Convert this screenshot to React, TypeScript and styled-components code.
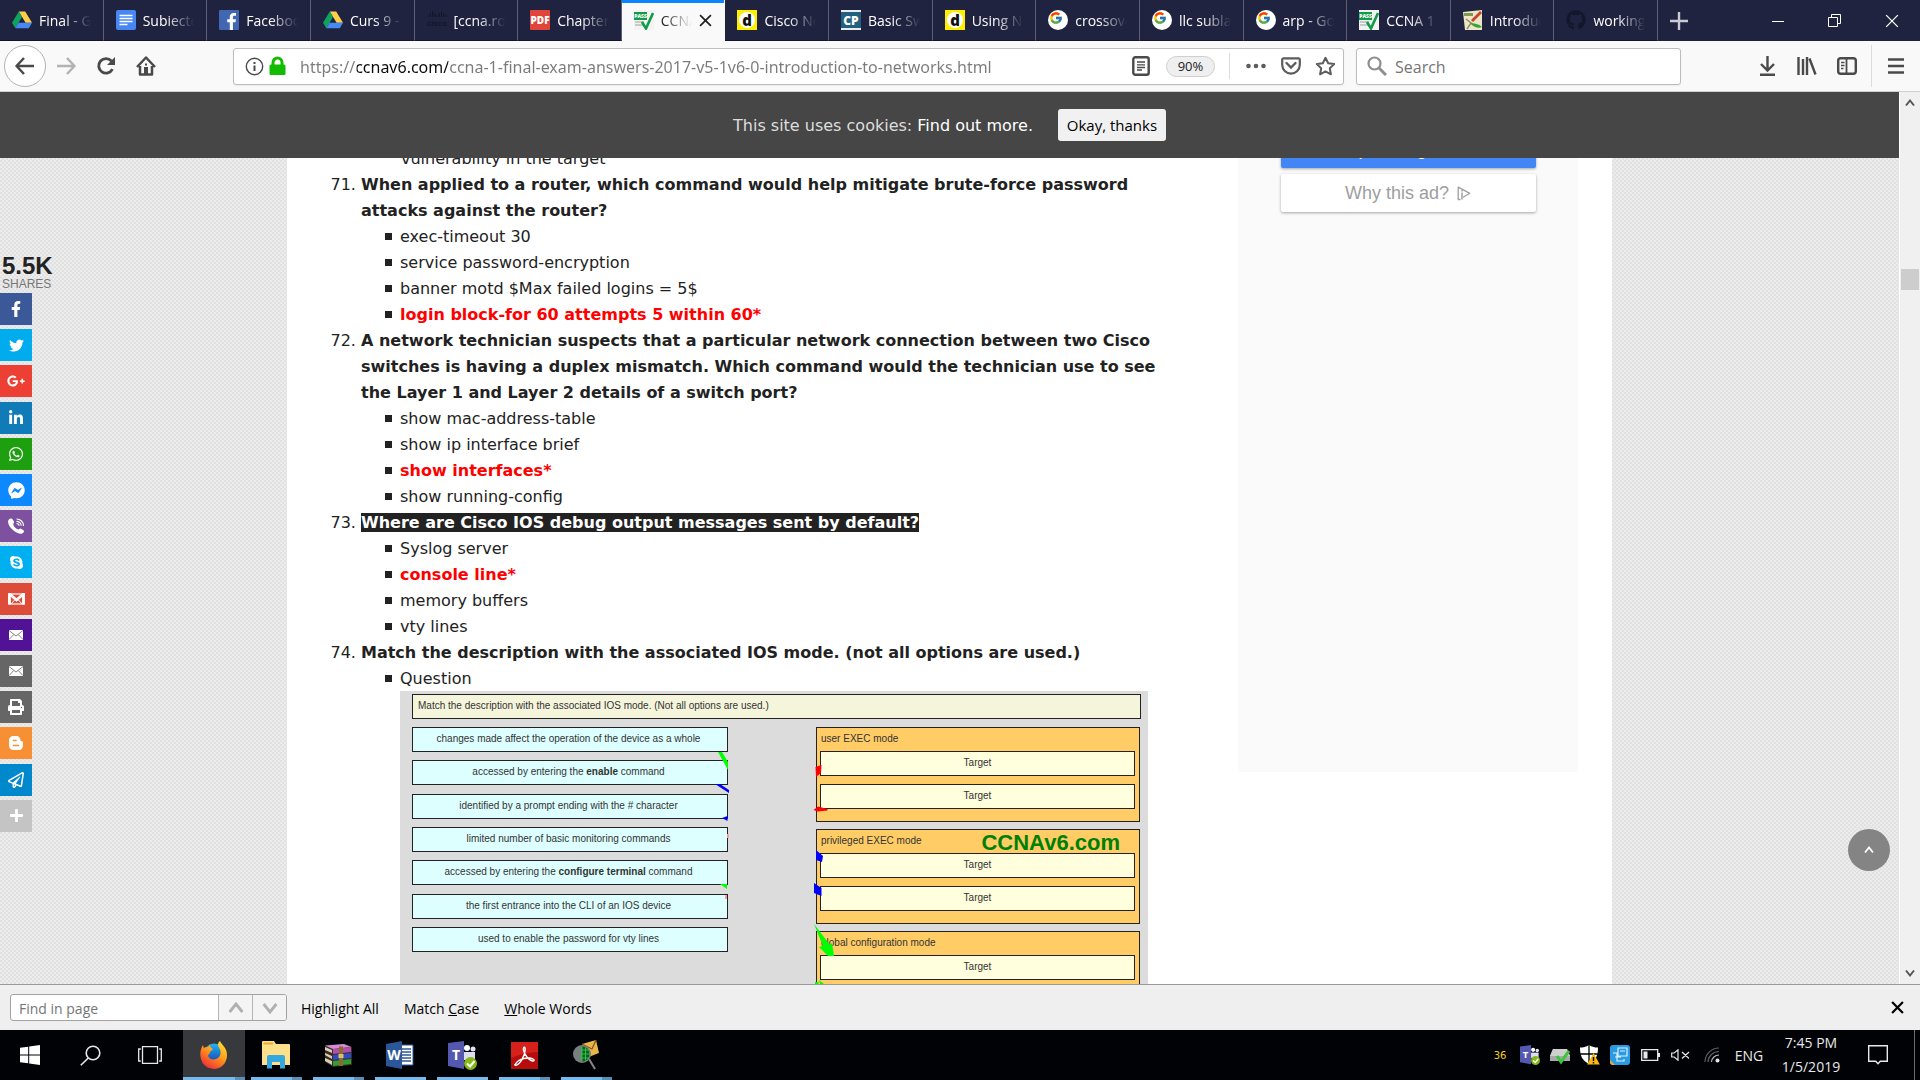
import React from "react";
import styled, { createGlobalStyle, css } from "styled-components";
import { FcGoogle } from "react-icons/fc";
import {
  FaBloggerB, FaFacebookF, FaFacebookMessenger, FaGithub, FaGooglePlusG, FaLinkedinIn,
  FaPlus, FaPrint, FaRegPaperPlane, FaSkype, FaTwitter, FaWhatsapp,
} from "react-icons/fa";

const ui = `"Open Sans", "Noto Sans", sans-serif`;
const body = `"DejaVu Sans", Verdana, sans-serif`;
const arial = `"Liberation Sans", Arial, sans-serif`;

const Global = createGlobalStyle`
  * { box-sizing: border-box; }
  body { margin: 0; font-family: ${ui}; color: #222; }
  button, input { font: inherit; color: inherit; }
  button { border: 0; padding: 0; background: none; cursor: pointer; }
  svg { display: block; flex: none; }
`;

const Screen = styled.div`
  display: flex;
  flex-direction: column;
  height: 100vh;
  overflow: hidden;
`;

/* ---------- tab strip ---------- */
const TabStrip = styled.header`
  display: flex;
  height: 41px;
  flex: none;
  background: #202340;
  color: #fff;
`;
const Tabs = styled.nav`
  display: flex;
  flex: 1;
  min-width: 0;
`;
const Tab = styled.button<{ $active?: boolean }>`
  display: flex;
  align-items: center;
  gap: 7px;
  flex: 1 1 0;
  min-width: 0;
  padding: 0 12px;
  font-size: 14px;
  border-right: 1px solid #5d5f78;
  border-bottom: 1px solid #12142b;
  ${(p) => p.$active && css`
    background: #f9f9fa;
    color: #222;
    border-color: #f9f9fa;
    box-shadow: inset 0 3px #0a84ff;
  `}
`;
const TabTitle = styled.span`
  flex: 1;
  min-width: 0;
  overflow: hidden;
  white-space: nowrap;
  text-align: left;
  mask-image: linear-gradient(to right, #000 calc(100% - 28px), transparent);
`;
const StripEnd = styled.div`
  display: flex;
  width: 262px;
  justify-content: space-between;
`;
const WindowButtons = styled.div`
  display: flex;
`;
const StripButton = styled.button<{ $w: number }>`
  width: ${(p) => p.$w}px;
  display: grid;
  place-items: center;
`;

/* ---------- navigation toolbar ---------- */
const Toolbar = styled.div`
  display: flex;
  align-items: center;
  flex: none;
  height: 51px;
  padding: 0 4px;
  background: #f9f9fa;
  border-bottom: 1px solid #cfcfd0;
  color: #4a4a4b;
`;
const BackButton = styled.button`
  width: 42px;
  height: 42px;
  display: grid;
  place-items: center;
  border: 1px solid #b4b4b5;
  border-radius: 50%;
  background: #fff;
`;
const ToolButton = styled.button<{ $dim?: boolean }>`
  width: 40px;
  height: 40px;
  display: grid;
  place-items: center;
  color: ${(p) => (p.$dim ? "#b3b3b4" : "inherit")};
`;
const Field = styled.div`
  display: flex;
  align-items: center;
  height: 37px;
  border: 1px solid #bdbdbe;
  border-radius: 3px;
  background: #fff;
  box-shadow: 0 1px 2px rgba(0, 0, 0, 0.06);
`;
const UrlField = styled(Field)`
  flex: 1;
  margin-left: 67px;
  padding: 0 0 0 11px;
  gap: 5px;
`;
const UrlInput = styled.input`
  flex: 1;
  min-width: 0;
  height: 30px;
  margin-left: 9px;
  padding: 2px 0 0;
  border: 0;
  outline: 0;
  font-family: "Noto Sans", sans-serif;
  font-size: 16px;
  color: transparent;
  background: linear-gradient(to right, #7b7b7b 57px, #0c0c0d 57px 148px, #7b7b7b 148px);
  background-clip: text;
`;
const Zoom = styled.button`
  width: 49px;
  height: 21px;
  margin: 0 9px 0 11px;
  border: 1px solid #cfcfcf;
  border-radius: 11px;
  background: #efefef;
  font-size: 13px;
  line-height: 18px;
  color: #222;
`;
const Rule = styled.span<{ $h: number; $gap?: number }>`
  width: 1px;
  height: ${(p) => p.$h}px;
  margin: 0 ${(p) => p.$gap ?? 0}px;
  background: #dcdcdd;
`;
const FieldButton = styled.button`
  width: 35px;
  height: 34px;
  display: grid;
  place-items: center;
  color: #5c5c5d;
`;
const FieldActions = styled.div`
  display: flex;
  padding-left: 3px;
`;
const SearchField = styled(Field)`
  width: 325px;
  margin: 0 66px 0 12px;
  padding-left: 10px;
  gap: 8px;
  color: #6f6f70;
`;
const PlainInput = styled.input`
  flex: 1;
  min-width: 0;
  border: 0;
  padding: 2px 0 0;
  outline: 0;
  background: none;
  font-size: 16px;
  &::placeholder { color: #757576; opacity: 1; }
`;

/* ---------- page viewport ---------- */
const Viewport = styled.div`
  display: flex;
  flex: 1;
  min-height: 0;
`;
const Page = styled.main`
  position: relative;
  display: flex;
  flex-direction: column;
  flex: 1;
  min-width: 0;
  overflow: hidden;
  background: repeating-conic-gradient(#ececec 0 25%, #e1e1e1 0 50%) 0 0 / 4px 4px;
  font-family: ${body};
`;
const CookieBar = styled.div`
  display: flex;
  align-items: center;
  justify-content: center;
  gap: 25px;
  flex: none;
  height: 66px;
  background: #464646;
  color: #ddd;
  font-size: 16px;
  a { color: #fff; text-decoration: none; }
`;
const CookieButton = styled.button`
  height: 32px;
  width: 108px;
  border-radius: 3px;
  background: #f1f1f1;
  color: #000;
  font-family: ${ui};
  font-size: 15px;
`;
const Clip = styled.div`
  flex: 1;
  min-height: 0;
  overflow: hidden;
`;
const Panel = styled.div`
  display: flex;
  gap: 90px;
  max-width: 1325px;
  height: 100%;
  margin: 0 auto;
  padding: 0 34px;
  background: #fff;
`;
const Article = styled.article`
  flex: 1;
  min-width: 0;
  margin-top: -12px;
  font-size: 16px;
  line-height: 26px;
`;
const Continued = styled.p`
  margin: 0;
  padding-left: 80px;
`;
const Questions = styled.ol`
  margin: 0;
  padding-left: 40px;
`;
const QuestionText = styled.strong`
  white-space: pre;
`;
const Selected = styled.mark`
  background: #222;
  color: #fff;
`;
const Options = styled.ul`
  margin: 0;
  padding-left: 39px;
  list-style: none;
`;
const Option = styled.li<{ $right?: boolean }>`
  &::before {
    content: "";
    display: inline-block;
    width: 7px;
    height: 7px;
    margin: 0 8px 0 -15px;
    vertical-align: 2px;
    background: #222;
  }
  ${(p) => p.$right && css`
    font-weight: bold;
    color: #f00;
  `}
`;

/* ---------- matching exercise ---------- */
const Figure = styled.figure`
  position: relative;
  margin: -1px 0 0;
  height: 400px;
  padding: 3px 8px 0 12px;
  background: #dcdcdc;
  font: 10px/22px ${arial};
  color: #333;
`;
const Prompt = styled.div`
  height: 25px;
  margin-right: -1px;
  padding-left: 5px;
  border: 1px solid #222;
  background: #f5f5dc;
`;
const Columns = styled.div`
  display: flex;
  justify-content: space-between;
  align-items: flex-start;
  margin-top: 8px;
`;
const Sources = styled.div`
  display: flex;
  flex-direction: column;
  justify-content: space-between;
  width: 316px;
  height: 225px;
`;
const Source = styled.div`
  height: 25px;
  padding-right: 3px;
  border: 1px solid #222;
  background: #dff;
  text-align: center;
`;
const Groups = styled.div`
  display: flex;
  flex-direction: column;
  gap: 7px;
  width: 324px;
`;
const Group = styled.section`
  display: flex;
  flex-direction: column;
  gap: 8px;
  height: 95px;
  padding: 0 4px 0 3px;
  border: 1px solid #222;
  background: #fc6;
`;
const GroupName = styled.div`
  height: 22px;
  margin-bottom: -7px;
  padding-left: 1px;
`;
const Target = styled.div`
  height: 25px;
  border: 1px solid #222;
  background: #ffd;
  text-align: center;
`;
const Watermark = styled.span`
  position: absolute;
  right: 28px;
  top: 140px;
  font: bold 22px/24px ${arial};
  color: #008000;
`;
const Marks = styled.svg`
  position: absolute;
  left: 0;
  top: 0;
`;

/* ---------- advertisement ---------- */
const Ad = styled.aside`
  display: flex;
  flex-direction: column;
  align-items: center;
  gap: 6px;
  width: 340px;
  height: 642px;
  margin-top: -28px;
  background: #fafafa;
`;
const AdButton = styled.button<{ $blue?: boolean }>`
  display: flex;
  align-items: center;
  justify-content: center;
  gap: 8px;
  width: 255px;
  height: 38px;
  border-radius: 2px;
  background: ${(p) => (p.$blue ? "#4285f4" : "#fff")};
  color: ${(p) => (p.$blue ? "#fff" : "#9e9e9e")};
  box-shadow: 0 1px 3px rgba(0, 0, 0, 0.35);
  font: 18px ${arial};
`;

/* ---------- floating page controls ---------- */
const ShareBar = styled.div`
  position: absolute;
  left: 0;
  top: 162px;
  font-family: ${arial};
`;
const ShareCount = styled.div`
  padding-left: 2px;
  font-size: 12px;
  line-height: 12px;
  color: #777;
  strong {
    display: block;
    font-size: 24px;
    line-height: 24px;
    color: #222;
  }
`;
const ShareList = styled.div`
  display: flex;
  flex-direction: column;
  justify-content: space-between;
  width: 32px;
  height: 539px;
  margin-top: 3px;
`;
const ShareButton = styled.button<{ $bg: string }>`
  display: grid;
  place-items: center;
  height: 32px;
  background: ${(p) => p.$bg};
  color: #fff;
`;
const TopButton = styled.button`
  position: absolute;
  right: 9px;
  bottom: 113px;
  width: 42px;
  height: 42px;
  display: grid;
  place-items: center;
  border-radius: 50%;
  background: #848484;
`;
const Scrollbar = styled.div`
  display: flex;
  flex-direction: column;
  width: 21px;
  border-left: 1px solid #fff;
  background: #f0f0f0;
`;
const ScrollArrow = styled.button`
  display: grid;
  place-items: center;
  height: 22px;
`;
const Track = styled.div`
  flex: 1;
  padding: 155px 1px 0;
`;
const Thumb = styled.div`
  height: 21px;
  background: #cdcdcd;
`;

/* ---------- find bar ---------- */
const FindBar = styled.form`
  display: flex;
  align-items: center;
  flex: none;
  height: 46px;
  padding: 0 16px 0 10px;
  border-top: 1px solid #9a9a9a;
  background: #efefef;
  font-size: 14px;
  color: #000;
`;
const FindGroup = styled.div`
  display: flex;
  width: 277px;
  height: 27px;
  margin-right: 14px;
  border: 1px solid #a3a3a3;
  border-radius: 3px;
  overflow: hidden;
  background: #fff;
`;
const FindInput = styled(PlainInput)`
  padding: 1px 0 0 8px;
  font-size: 14px;
`;
const FindStep = styled.button`
  display: grid;
  place-items: center;
  width: 34px;
  border-left: 1px solid #b4b4b4;
  background: #f4f4f4;
`;
const FindOption = styled.button`
  margin-right: 25px;
  padding-top: 2px;
`;
const FindClose = styled.button`
  margin-left: auto;
`;

/* ---------- taskbar ---------- */
const Taskbar = styled.footer`
  display: flex;
  flex: none;
  height: 50px;
  background: #010206;
  color: #e8e8e8;
`;
const SystemButton = styled.button`
  width: 60px;
  display: grid;
  place-items: center;
`;
const Apps = styled.div`
  display: flex;
  margin-left: 3px;
`;
const AppButton = styled.button<{ $active?: boolean; $stack?: boolean }>`
  width: 62px;
  display: grid;
  place-items: center;
  background:
    linear-gradient(to right, #76b9ed 0 calc(100% - 10px), ${(p) => (p.$stack ? "#5c8fb8" : "#76b9ed")} 0)
      center bottom / ${(p) => (p.$active ? "100%" : "51px")} 3px no-repeat
      ${(p) => (p.$active ? "#38393d" : "transparent")};
`;
const Tray = styled.div`
  display: flex;
  align-items: center;
  margin-left: auto;
  font-size: 14px;
`;
const TrayButton = styled.button<{ $w?: number }>`
  width: ${(p) => p.$w ?? 30}px;
  height: 40px;
  display: grid;
  place-items: center;
`;
const Temperature = styled.span`
  width: 30px;
  text-align: center;
  font: 10px ${body};
  color: #f2cf1d;
`;
const Clock = styled.time`
  width: 84px;
  line-height: 24px;
  text-align: center;
`;
const DesktopEdge = styled.button`
  width: 6px;
  height: 50px;
  margin-left: 11px;
  border-left: 1px solid #6b6b6b;
`;

/* ---------- icons ---------- */
const stroke = (w = 2) => ({ fill: "none", stroke: "currentColor", strokeWidth: w });

const Drive = () => (
  <svg width="20" height="20" viewBox="0 0 20 20">
    <path d="M6.8 1.5h6.4L20 12.8h-6.4z" fill="#ffcf48" />
    <path d="M6.8 1.5 10 7 3.3 18.3 0 12.8z" fill="#11a15f" />
    <path d="M6.5 12.8H20l-3.2 5.5H3.3z" fill="#4688f4" />
  </svg>
);
const Docs = () => (
  <svg width="20" height="20" viewBox="0 0 20 20">
    <rect width="20" height="20" rx="2" fill="#4687f5" />
    <path d="M3.5 5.5h13M3.5 8.5h13M3.5 11.5h13M3.5 14.5h8" stroke="#fff" strokeWidth="1.4" />
  </svg>
);
const Facebook = () => (
  <svg width="20" height="20" viewBox="0 0 20 20">
    <rect width="20" height="20" rx="1" fill="#4267b2" />
    <path d="M10.8 20v-7.7H8.2v-3h2.6V7c0-2.600 1.600-4 3.900-4 1.100 0 2 .1 2.300.1v2.700h-1.600c-1.300 0-1.500.6-1.500 1.500v2h3l-.4 3h-2.600V20z" fill="#fff" />
  </svg>
);
const CiscoIcon = () => (
  <svg width="20" height="20" viewBox="0 0 20 20">
    <path d="M1 5v2M3.300 3v4M5.600 1v6M7.900 3v4M10 5v2M12.200 3v4M14.500 1v6M16.800 3v4M19 5v2" stroke="#11142a" strokeWidth="1" />
    <text x="10" y="16" textAnchor="middle" fontFamily="Liberation Sans" fontWeight="bold" fontSize="8" fill="#11142a">cisco</text>
  </svg>
);
const PdfIcon = () => (
  <svg width="20" height="20" viewBox="0 0 20 20">
    <rect width="20" height="20" rx="1" fill="#e1443a" />
    <text x="10" y="13.700" textAnchor="middle" fontFamily="Open Sans" fontWeight="800" fontSize="10" fill="#fff">PDF</text>
  </svg>
);
const DIcon = () => (
  <svg width="20" height="20" viewBox="0 0 20 20">
    <rect width="20" height="20" fill="#ffee00" />
    <circle cx="10" cy="10" r="8" fill="#fff" />
    <text x="10" y="15.500" textAnchor="middle" fontFamily="Open Sans" fontWeight="800" fontSize="15" fill="#111">d</text>
  </svg>
);
const CpIcon = () => (
  <svg width="20" height="20" viewBox="0 0 20 20">
    <rect width="20" height="20" fill="#e8eef0" />
    <rect y="2" width="20" height="16" fill="#236080" />
    <text x="10" y="14.500" textAnchor="middle" fontFamily="Open Sans" fontWeight="800" fontSize="12" fill="#fff">CP</text>
  </svg>
);
const Pass = () => (
  <svg width="20" height="20" viewBox="0 0 20 20">
    <rect width="20" height="20" fill="#f2f4f2" />
    <rect y="2" width="13" height="8" fill="#129a4b" />
    <text x="6.500" y="8.200" textAnchor="middle" fontFamily="Open Sans" fontWeight="800" fontSize="5" fill="#fff">PASS</text>
    <path d="M1 12h9M1 15h8" stroke="#b8bdb9" strokeWidth="1.600" />
    <path d="m8 12 4 6.500L19 3" fill="none" stroke="#129a4b" strokeWidth="2.600" />
  </svg>
);
const Google = () => (
  <svg width="20" height="20" viewBox="0 0 20 20">
    <circle cx="10" cy="10" r="10" fill="#fff" />
    <FcGoogle x="1" y="1" width="18" height="18" />
  </svg>
);
const Notes = () => (
  <svg width="20" height="20" viewBox="0 0 20 20">
    <path d="M0 2 19 0v20H2z" fill="#eee6c6" />
    <path d="M1 3h9v3H1z" fill="#7b9a52" />
    <path d="m8 10 9-9 2 2-9 9z" fill="#c8452c" />
    <path d="m3 9 5 4-4 6" fill="none" stroke="#8a8f6a" strokeWidth="1.500" />
    <path d="M7 13c4 0 9 1 12 4-3 2-9 0-12-4z" fill="#3aa23d" />
  </svg>
);
const Chevron = ({ up, size = 10, color = "#555", w = 2 }: { up?: boolean; size?: number; color?: string; w?: number }) => (
  <svg width={size} height={size} viewBox="0 0 10 10">
    <path d={up ? "m1 7.500 4-5 4 5" : "m1 2.500 4 5 4-5"} fill="none" stroke={color} strokeWidth={w} />
  </svg>
);
const Cross = ({ size, w }: { size: number; w: number }) => (
  <svg width={size} height={size} viewBox="0 0 12 12"><path d="m1 1 10 10M11 1 1 11" {...stroke(w)} /></svg>
);
const Arrow = ({ left }: { left?: boolean }) => (
  <svg width="20" height="20" viewBox="0 0 20 20">
    <path d={left ? "M19 10H1.500M9 2l-7.500 8L9 18" : "M1 10h17.500M11 2l7.500 8-7.500 8"} {...stroke(2.5)} strokeLinejoin="round" />
  </svg>
);
const Reload = () => (
  <svg width="20" height="20" viewBox="0 0 20 20">
    <path d="M16.500 13.200A7.300 7.300 0 1 1 15.500 5" {...stroke(2.8)} />
    <path d="M19 1v8h-8z" fill="currentColor" />
  </svg>
);
const Home = () => (
  <svg width="20" height="20" viewBox="0 0 20 20">
    <path d="M1 11 10 1.500 19 11M4 10v8.500h12V10" {...stroke(2.5)} strokeLinejoin="round" />
    <path d="M8 11h4v8H8z" fill="currentColor" />
    <path d="M10 7.500v2" {...stroke(2)} />
  </svg>
);
const Info = () => (
  <svg width="19" height="19" viewBox="0 0 19 19">
    <circle cx="9.500" cy="9.500" r="8.200" {...stroke(1.4)} />
    <path d="M9.500 8.500v5.500M9.500 5v2" {...stroke(2)} />
  </svg>
);
const Lock = () => (
  <svg width="17" height="20" viewBox="0 0 17 20">
    <path d="M4 10V6.500a4.500 4.500 0 0 1 9 0V10" fill="none" stroke="#12bc00" strokeWidth="3" />
    <rect x=".5" y="8.500" width="16" height="10.500" rx="1.500" fill="#12bc00" />
  </svg>
);
const Reader = () => (
  <svg width="18" height="20" viewBox="0 0 18 20">
    <rect x="1.300" y="1.300" width="15.400" height="17.400" rx="2" {...stroke(2.4)} />
    <path d="M5 6h8M5 8.800h8M5 11.500h8M5 14h5" {...stroke(1.3)} />
  </svg>
);
const Dots = () => (
  <svg width="20" height="6" viewBox="0 0 20 6"><g fill="currentColor"><circle cx="2.500" cy="3" r="2.300" /><circle cx="10" cy="3" r="2.300" /><circle cx="17.500" cy="3" r="2.300" /></g></svg>
);
const Pocket = () => (
  <svg width="20" height="18" viewBox="0 0 20 18">
    <path d="M2.500 1.300h15a1.300 1.300 0 0 1 1.300 1.300v5.200a8.800 8.800 0 0 1-17.600 0V2.600a1.300 1.300 0 0 1 1.300-1.300z" {...stroke(2.2)} />
    <path d="m5.500 6 4.500 4.500L14.500 6" {...stroke(2.4)} strokeLinecap="round" />
  </svg>
);
const Star = () => (
  <svg width="21" height="20" viewBox="0 0 21 20">
    <path d="m10.500 1.800 2.700 5.500 6 .8-4.400 4.200 1.100 6-5.400-2.900-5.400 2.900 1.100-6L1.800 8.100l6-.8z" {...stroke(2)} strokeLinejoin="round" />
  </svg>
);
const Magnifier = () => (
  <svg width="20" height="20" viewBox="0 0 20 20">
    <circle cx="7.500" cy="7.500" r="6" fill="none" stroke="#8e8e8f" strokeWidth="2.200" />
    <path d="m12 12 7 7" stroke="#8e8e8f" strokeWidth="3" />
  </svg>
);
const Download = () => (
  <svg width="17" height="20" viewBox="0 0 17 20"><path d="M8.500 0v14M2 8l6.500 6.500L15 8M1 18.700h15" {...stroke(2.4)} /></svg>
);
const Library = () => (
  <svg width="20" height="18" viewBox="0 0 20 18"><path d="M1.500 0v18M6 2v16M10 0v18M12.500 1.500 18.500 17.500" {...stroke(2.4)} /></svg>
);
const Sidebar = () => (
  <svg width="20" height="18" viewBox="0 0 20 18">
    <rect x="1.200" y="1.200" width="17.600" height="15.600" rx="2.500" {...stroke(2.4)} />
    <path d="M9.500 1v16" {...stroke(1.8)} />
    <path d="M4 5.500h3.500M4 8.500h3.500M4 11.500h2.500" {...stroke(1.3)} />
  </svg>
);
const Menu = () => (
  <svg width="16" height="16" viewBox="0 0 16 16"><path d="M0 1.500h16M0 8h16M0 14.500h16" {...stroke(2.4)} /></svg>
);
const AdChoices = () => (
  <svg width="14" height="15" viewBox="0 0 14 15">
    <path d="M3.500 13.500H1.200V1.200L12.800 7.300 6 11.200" {...stroke(1.3)} strokeLinejoin="round" />
    <path d="M5 6.500v7M5 4v1.500" {...stroke(1.5)} />
  </svg>
);
const ViberPhone = () => (
  <svg width="17" height="16" viewBox="0 0 17 16">
    <path d="M1 1.500C2.500 0 4 .2 5 2l1 1.800c.4 1-.8 1.700-.8 2.500C5.700 8.500 8 11 10.300 11.500c.9 0 1.500-1.200 2.500-.8l2.700 1.600c1.300 1-.2 3-1.800 3.400C8 16.200 0 9 0 3.500c0-.8.400-1.400 1-2z" fill="#fff" />
    <path d="M8.500 1c4 0 7 3 7 7M8.500 3.300c2.700 0 4.700 2 4.700 4.500M8.500 5.500c1.500 0 2.500 1 2.500 2.300" {...stroke(1.2)} />
  </svg>
);
const Gmail = () => (
  <svg width="17" height="12" viewBox="0 0 17 12">
    <rect x="1" y="1" width="15" height="10" fill="none" stroke="#fff" strokeWidth="1.200" />
    <path d="M1.500 11.500V1l7 6 7-6v10.500" fill="none" stroke="#fff" strokeWidth="2.800" />
    <path d="m3 11 3.500-4M14 11l-3.500-4" stroke="#fff" strokeWidth="1" />
  </svg>
);
const Mail = () => (
  <svg width="14" height="10" viewBox="0 0 14 10">
    <rect width="14" height="10" fill="#fff" />
    <path d="m0 .5 7 5.500 7-5.500M0 9.500 4.800 4.500M14 9.500 9.200 4.500" fill="none" stroke="#777" strokeWidth=".9" />
  </svg>
);
const WindowsLogo = () => (
  <svg width="20" height="20" viewBox="0 0 20 20" fill="#fff">
    <path d="M0 2.800 8.200 1.700v7.800H0zM9.200 1.500 20 0v9.500H9.200zM0 10.500h8.200v7.800L0 17.200zM9.200 10.500H20V20L9.200 18.500z" />
  </svg>
);
const TaskSearch = () => (
  <svg width="21" height="21" viewBox="0 0 21 21"><circle cx="13" cy="8" r="6.800" {...stroke(1.6)} /><path d="M8.300 13 .8 20.300" {...stroke(1.6)} /></svg>
);
const TaskView = () => (
  <svg width="24" height="18" viewBox="0 0 24 18"><path d="M4.500.7h15v16.600h-15zM2.800 3H.7v12h2.100M21.200 3h2.100v12h-2.100" {...stroke(1.3)} /></svg>
);
const Firefox = () => (
  <svg width="28" height="28" viewBox="0 0 28 28">
    <defs>
      <linearGradient id="ff-body" x1=".8" y1="0" x2=".2" y2="1">
        <stop offset="0" stopColor="#ffe22e" /><stop offset=".45" stopColor="#ff9a1a" /><stop offset="1" stopColor="#f0243c" />
      </linearGradient>
      <linearGradient id="ff-globe" x1="0" y1="0" x2="0" y2="1">
        <stop offset="0" stopColor="#1fb4f5" /><stop offset="1" stopColor="#1c3fa8" />
      </linearGradient>
    </defs>
    <circle cx="14" cy="12.500" r="10" fill="url(#ff-globe)" />
    <path d="M20 0c1 2.500 3 4 5 7 3 5 2.500 11-.5 15.500A13.300 13.300 0 0 1 1 18C-.5 13 .5 8 3 4l.8 3C5 6 6.500 5.800 8 6l2-2.500c0 2 .5 3 2.500 4.300.5 1.500-1.500 2-2.500 3 .5 2-2 2-2 4 1 3.500 5 4.500 8.500 3 3-1.300 4.500-4 4-7.500C20 7 17.500 5.500 18 3c.3-1.300 1-2.300 2-3z" fill="url(#ff-body)" />
  </svg>
);
const Explorer = () => (
  <svg width="28" height="28" viewBox="0 0 28 28">
    <path d="M0 1a1 1 0 0 1 1-1h11l2 3h13a1 1 0 0 1 1 1v20H0z" fill="#ffe08a" />
    <path d="M1.500 1.500H11v2H1.500z" fill="#e7ab2d" />
    <path d="M5 27.500V16q0-2 2-2h14q2 0 2 2v11.500h-5V21h-8v6.500z" fill="#35a8e0" />
  </svg>
);
const WinRar = () => (
  <svg width="27" height="23" viewBox="0 0 27 23">
    <path d="M0 2 19 0l8 3v18l-19 2-8-5z" fill="#3b2b20" />
    <path d="m0 1.500 19-1.500 7 3-18 2z" fill="#d58ad2" /><path d="m8 5 18-2v5L8 10z" fill="#b04ea9" />
    <path d="m8 11 18-2v5L8 16z" fill="#2f49c9" /><path d="m8 17 18-2v5L8 22z" fill="#2f9f35" />
    <path d="M0 3l7 3v3L0 6zM0 9l7 3v3l-7-4zM0 14l7 3v4l-7-4z" fill="#d9cdbb" />
    <path d="M14 2.500h4V22h-4z" fill="#8b6a32" /><path d="M13.500 10h5v4h-5z" fill="#d9c06b" />
  </svg>
);
const Word = () => (
  <svg width="28" height="28" viewBox="0 0 28 28">
    <path d="M14 4h13v20H14z" fill="#fff" stroke="#2b579a" /><path d="M16 8h9M16 11h9M16 14h9M16 17h9M16 20h9" stroke="#2b579a" strokeWidth="1.500" />
    <path d="m0 3 16-3v28L0 25z" fill="#2b579a" />
    <text x="8" y="19" textAnchor="middle" fontFamily="Open Sans" fontWeight="700" fontSize="14" fill="#fff">W</text>
  </svg>
);
const Teams = ({ size = 29 }: { size?: number }) => (
  <svg width={size} height={size} viewBox="0 0 29 29">
    <circle cx="19" cy="7" r="3" fill="#fff" /><circle cx="25" cy="8" r="2.500" fill="#e3e3f5" />
    <path d="M16 11h11v8h-11z" fill="#dcdcf2" />
    <path d="m0 2 16-2v28L0 25z" fill="#5558af" />
    <text x="8" y="19" textAnchor="middle" fontFamily="Open Sans" fontWeight="700" fontSize="14" fill="#fff">T</text>
    <circle cx="22.500" cy="22.500" r="6.500" fill="#84b816" /><path d="m19 22.500 3 3 4.500-5.500" fill="none" stroke="#fff" strokeWidth="2" />
  </svg>
);
const Acrobat = () => (
  <svg width="27" height="27" viewBox="0 0 27 27">
    <rect width="27" height="27" fill="#b80d0d" /><path d="M0 0h27v10Q14 10 0 16z" fill="#d5201c" />
    <path d="M4 22.500c2-4 7.500-7 14.500-6.500 5 .4 5.500 3 3.500 3-3.500 0-8.500-5.500-9.500-11-.6-3.800 2-3.800 1.700 0-.6 6-5 14-8.700 15.200-1.200.4-2-.1-1.500-.7z" fill="none" stroke="#fff" strokeWidth="1.400" />
  </svg>
);
const Packet = () => (
  <svg width="28" height="30" viewBox="0 0 28 30">
    <path d="m17 19 6 10" stroke="#888" strokeWidth="2" />
    <path d="m10 4 14-4 3 13-13 5z" fill="#eab64c" /><path d="m10 4 10 5 4-9" fill="none" stroke="#7a5517" strokeWidth="1.200" />
    <circle cx="10" cy="14" r="9" fill="#76807c" /><path d="M10 6.500a7.500 7.500 0 0 1 0 15z" fill="#0b5d18" />
    <path d="M10 7v14M13.500 7.500v13M10 10h7M10 14h8M10 18h7" stroke="#23d44c" strokeWidth=".9" />
  </svg>
);
const Disk = () => (
  <svg width="20" height="19" viewBox="0 0 20 19">
    <path d="M3 3h14l3 7v5H0v-5z" fill="#a9a9a9" /><path d="M3 3h14l3 7H0z" fill="#cfcfcf" />
    <path d="m7 10 4 6 8-11" fill="none" stroke="#3ec43a" strokeWidth="3" />
  </svg>
);
const Shield = () => (
  <svg width="20" height="20" viewBox="0 0 20 20">
    <path d="M9 0c3 2 6 2.500 9 2.500 0 8-2 13-9 16.500C2 15.500 0 10.500 0 2.500 3 2.500 6 2 9 0z" fill="#fff" />
    <path d="M9 0v19M0 9h18" stroke="#010206" strokeWidth="1.300" />
    <path d="m13.500 8 6.300 11.500H7.200z" fill="#fdb813" /><path d="M13.500 12v4M13.500 17v1.500" stroke="#111" strokeWidth="1.500" />
  </svg>
);
const Intel = () => (
  <svg width="20" height="20" viewBox="0 0 20 20">
    <rect width="20" height="20" rx="3" fill="#2a9be0" />
    <path d="M8 3h9v8H8zM10 6h5M3 8h4v8h7v-2M5 12h6" fill="none" stroke="#d9f1ff" strokeWidth="1.200" />
    <path d="M0 15 5 20H3a3 3 0 0 1-3-3z" fill="#f2a33a" />
  </svg>
);
const Battery = () => (
  <svg width="19" height="12" viewBox="0 0 19 12"><path d="M.7.700h16v10.600H.7z" {...stroke(1.3)} /><path d="M2.500 2.500h4v7h-4zM17 4h2v4h-2z" fill="currentColor" /></svg>
);
const Mute = () => (
  <svg width="19" height="12" viewBox="0 0 19 12"><path d="M.7 4h2.500L7 .8v10.400L3.200 8H.7zM11 3l7 6.500M18 3l-7 6.500" {...stroke(1.2)} /></svg>
);
const Wifi = () => (
  <svg width="16" height="16" viewBox="0 0 16 16">
    <path d="M1 15A14 14 0 0 1 15 1M4 15A11 11 0 0 1 15 4.500" {...stroke(1.2)} opacity=".4" />
    <path d="M7.500 15A7.500 7.500 0 0 1 15 8" {...stroke(1.2)} opacity=".8" /><circle cx="13.500" cy="13.500" r="2" fill="currentColor" />
  </svg>
);
const Notification = () => (
  <svg width="20" height="20" viewBox="0 0 20 20"><path d="M.7.700h18.600v15.500h-7L10 18.800l-2.300-2.600h-7z" {...stroke(1.4)} /></svg>
);

/* ---------- data ---------- */
const tabs: { title: string; icon: React.ReactNode; active?: boolean }[] = [
  { title: "Final - Google", icon: <Drive /> },
  { title: "Subiecte", icon: <Docs /> },
  { title: "Facebook", icon: <Facebook /> },
  { title: "Curs 9 - ", icon: <Drive /> },
  { title: "[ccna.ro]", icon: <CiscoIcon /> },
  { title: "Chapter", icon: <PdfIcon /> },
  { title: "CCNA", icon: <Pass />, active: true },
  { title: "Cisco Ne", icon: <DIcon /> },
  { title: "Basic Sw", icon: <CpIcon /> },
  { title: "Using Ne", icon: <DIcon /> },
  { title: "crossove", icon: <Google /> },
  { title: "llc subla", icon: <Google /> },
  { title: "arp - Goo", icon: <Google /> },
  { title: "CCNA 1", icon: <Pass /> },
  { title: "Introduc", icon: <Notes /> },
  { title: "working", icon: <FaGithub size={20} color="#14162c" /> },
];

const shares: [string, string, React.ReactNode][] = [
  ["Facebook", "#3b5998", <FaFacebookF size={16} />],
  ["Twitter", "#00acee", <FaTwitter size={15} />],
  ["Google+", "#ed4035", <FaGooglePlusG size={18} />],
  ["LinkedIn", "#117bb8", <FaLinkedinIn size={16} />],
  ["WhatsApp", "#1d9f0f", <FaWhatsapp size={16} />],
  ["Messenger", "#0d88ff", <FaFacebookMessenger size={17} />],
  ["Viber", "#7d51a0", <ViberPhone />],
  ["Skype", "#00aff0", <FaSkype size={15} />],
  ["Gmail", "#dd4b39", <Gmail />],
  ["Yahoo Mail", "#511295", <Mail />],
  ["Email", "#666", <Mail />],
  ["Print", "#666", <FaPrint size={16} />],
  ["Blogger", "#f79034", <FaBloggerB size={16} />],
  ["Telegram", "#0088cc", <FaRegPaperPlane size={16} />],
  ["More", "#c4c4c4", <FaPlus size={15} />],
];

type Q = { lines: string[]; options: string[]; answer?: number; selected?: boolean; figure?: boolean };
const questions: Q[] = [
  {
    lines: ["When applied to a router, which command would help mitigate brute-force password", "attacks against the router?"],
    options: ["exec-timeout 30", "service password-encryption", "banner motd $Max failed logins = 5$", "login block-for 60 attempts 5 within 60*"],
    answer: 3,
  },
  {
    lines: [
      "A network technician suspects that a particular network connection between two Cisco",
      "switches is having a duplex mismatch. Which command would the technician use to see",
      "the Layer 1 and Layer 2 details of a switch port?",
    ],
    options: ["show mac-address-table", "show ip interface brief", "show interfaces*", "show running-config"],
    answer: 2,
  },
  {
    lines: ["Where are Cisco IOS debug output messages sent by default?"],
    options: ["Syslog server", "console line*", "memory buffers", "vty lines"],
    answer: 1,
    selected: true,
  },
  { lines: ["Match the description with the associated IOS mode. (not all options are used.)"], options: ["Question"], figure: true },
];

const sources: React.ReactNode[] = [
  "changes made affect the operation of the device as a whole",
  <>accessed by entering the <b>enable</b> command</>,
  "identified by a prompt ending with the # character",
  "limited number of basic monitoring commands",
  <>accessed by entering the <b>configure terminal</b> command</>,
  "the first entrance into the CLI of an IOS device",
  "used to enable the password for vty lines",
];

const MatchingFigure = () => (
  <Figure>
    <Prompt>Match the description with the associated IOS mode. (Not all options are used.)</Prompt>
    <Columns>
      <Sources>{sources.map((s, i) => <Source key={i}>{s}</Source>)}</Sources>
      <Groups>
        {["user EXEC mode", "privileged EXEC mode", "global configuration mode"].map((name) => (
          <Group key={name}>
            <GroupName>{name}</GroupName>
            <Target>Target</Target>
            <Target>Target</Target>
          </Group>
        ))}
      </Groups>
    </Columns>
    <Watermark>CCNAv6.com</Watermark>
    <Marks width="748" height="293" viewBox="0 0 748 293">
      <g fill="#0f0">
        <path d="M318 61h4l6 10v8zM320 193h7v5zM414 233l16 21 2-2 2 13h-6l-9-9 4-1zM415 291h4l-1 2h-3zM419 289l5 4h-4z" />
      </g>
      <g fill="#00f">
        <path d="M315 93h5l9 6v3zM322 127l5.500-2v5zM416 159l7 6-1 6-6-2zM414 192l7.500 5v8l-7.500-3z" />
      </g>
      <g fill="#f00">
        <path d="M415.500 76l6-2-.5 8-5 4zM413.500 119l4.500-3.500 9.500 2.500v1.500l-10 1z" />
      </g>
      <path d="M327 143h2v4h-2zM325 204h2v4h-2z" fill="#f5a0a0" />
    </Marks>
  </Figure>
);

export default function App() {
  return (
    <Screen>
      <Global />
      <TabStrip>
        <Tabs aria-label="Browser tabs">
          {tabs.map((t, i) => (
            <Tab key={i} $active={t.active}>
              {t.icon}
              <TabTitle>{t.title}</TabTitle>
              {t.active && <Cross size={13} w={1.6} />}
            </Tab>
          ))}
        </Tabs>
        <StripEnd>
          <StripButton $w={42} aria-label="New tab">
            <svg width="18" height="18" viewBox="0 0 18 18"><path d="M9 0v18M0 9h18" stroke="#c9cad3" strokeWidth="2.400" /></svg>
          </StripButton>
          <WindowButtons>
            <StripButton $w={57} aria-label="Minimize"><svg width="12" height="12"><path d="M0 6.500h12" stroke="#fff" /></svg></StripButton>
            <StripButton $w={57} aria-label="Restore">
              <svg width="13" height="13"><path d="M.5 3.500h9v9h-9zM3.500 3V.5h9v9H10" fill="none" stroke="#fff" /></svg>
            </StripButton>
            <StripButton $w={57} aria-label="Close"><Cross size={14} w={1.1} /></StripButton>
          </WindowButtons>
        </StripEnd>
      </TabStrip>

      <Toolbar>
        <BackButton aria-label="Back"><Arrow left /></BackButton>
        <ToolButton $dim aria-label="Forward"><Arrow /></ToolButton>
        <ToolButton aria-label="Reload"><Reload /></ToolButton>
        <ToolButton aria-label="Home"><Home /></ToolButton>
        <UrlField>
          <Info />
          <Lock />
          <UrlInput aria-label="Address" defaultValue="https://ccnav6.com/ccna-1-final-exam-answers-2017-v5-1v6-0-introduction-to-networks.html" />
          <Reader />
          <Zoom>90%</Zoom>
          <Rule $h={26} />
          <FieldActions>
            <FieldButton aria-label="Page actions"><Dots /></FieldButton>
            <FieldButton aria-label="Save to Pocket"><Pocket /></FieldButton>
            <FieldButton aria-label="Bookmark"><Star /></FieldButton>
          </FieldActions>
        </UrlField>
        <SearchField>
          <Magnifier />
          <PlainInput aria-label="Search" placeholder="Search" />
        </SearchField>
        <ToolButton aria-label="Downloads"><Download /></ToolButton>
        <ToolButton aria-label="Library"><Library /></ToolButton>
        <ToolButton aria-label="Sidebars"><Sidebar /></ToolButton>
        <Rule $h={42} $gap={4} />
        <ToolButton aria-label="Menu"><Menu /></ToolButton>
      </Toolbar>

      <Viewport>
        <Page>
          <CookieBar>
            <span>This site uses cookies: <a href="#cookies">Find out more.</a></span>
            <CookieButton>Okay, thanks</CookieButton>
          </CookieBar>
          <Clip>
            <Panel>
              <Article>
                <Continued>vulnerability in the target</Continued>
                <Questions start={71}>
                  {questions.map((q, i) => (
                    <li key={i}>
                      <QuestionText>{q.selected ? <Selected>{q.lines[0]}</Selected> : q.lines.join("\n")}</QuestionText>
                      <Options>
                        {q.options.map((o, j) => (
                          <Option key={o} $right={j === q.answer}>
                            {o}
                            {q.figure && <MatchingFigure />}
                          </Option>
                        ))}
                      </Options>
                    </li>
                  ))}
                </Questions>
              </Article>
              <Ad>
                <AdButton $blue>Stop seeing this ad</AdButton>
                <AdButton>Why this ad? <AdChoices /></AdButton>
              </Ad>
            </Panel>
          </Clip>
          <ShareBar>
            <ShareCount><strong>5.5K</strong>SHARES</ShareCount>
            <ShareList>
              {shares.map(([name, bg, icon]) => <ShareButton key={name} $bg={bg} aria-label={name}>{icon}</ShareButton>)}
            </ShareList>
          </ShareBar>
          <TopButton aria-label="Back to top"><Chevron up color="#fff" w={1.8} /></TopButton>
        </Page>
        <Scrollbar>
          <ScrollArrow aria-label="Scroll up"><Chevron up /></ScrollArrow>
          <Track><Thumb /></Track>
          <ScrollArrow aria-label="Scroll down"><Chevron /></ScrollArrow>
        </Scrollbar>
      </Viewport>

      <FindBar onSubmit={(e) => e.preventDefault()}>
        <FindGroup>
          <FindInput aria-label="Find in page" placeholder="Find in page" />
          <FindStep type="button" aria-label="Previous"><Chevron up size={16} color="#b0b0b0" w={1.8} /></FindStep>
          <FindStep type="button" aria-label="Next"><Chevron size={16} color="#b0b0b0" w={1.8} /></FindStep>
        </FindGroup>
        <FindOption type="button">High<u>l</u>ight All</FindOption>
        <FindOption type="button">Match <u>C</u>ase</FindOption>
        <FindOption type="button"><u>W</u>hole Words</FindOption>
        <FindClose type="button" aria-label="Close find bar"><Cross size={13} w={2} /></FindClose>
      </FindBar>

      <Taskbar>
        <SystemButton aria-label="Start"><WindowsLogo /></SystemButton>
        <SystemButton aria-label="Search Windows"><TaskSearch /></SystemButton>
        <SystemButton aria-label="Task view"><TaskView /></SystemButton>
        <Apps>
          <AppButton $active $stack aria-label="Firefox"><Firefox /></AppButton>
          <AppButton $stack aria-label="File Explorer"><Explorer /></AppButton>
          <AppButton $stack aria-label="WinRAR"><WinRar /></AppButton>
          <AppButton aria-label="Word"><Word /></AppButton>
          <AppButton aria-label="Teams"><Teams /></AppButton>
          <AppButton $stack aria-label="Acrobat Reader"><Acrobat /></AppButton>
          <AppButton $stack aria-label="Packet Tracer"><Packet /></AppButton>
        </Apps>
        <Tray>
          <Temperature>36</Temperature>
          <TrayButton aria-label="Teams status"><Teams size={20} /></TrayButton>
          <TrayButton aria-label="Drive"><Disk /></TrayButton>
          <TrayButton aria-label="Security"><Shield /></TrayButton>
          <TrayButton aria-label="Graphics"><Intel /></TrayButton>
          <TrayButton aria-label="Battery"><Battery /></TrayButton>
          <TrayButton aria-label="Volume"><Mute /></TrayButton>
          <TrayButton $w={34} aria-label="Network"><Wifi /></TrayButton>
          <TrayButton $w={40}>ENG</TrayButton>
          <Clock>7:45 PM<br />1/5/2019</Clock>
          <TrayButton $w={50} aria-label="Notifications"><Notification /></TrayButton>
          <DesktopEdge aria-label="Show desktop" />
        </Tray>
      </Taskbar>
    </Screen>
  );
}
